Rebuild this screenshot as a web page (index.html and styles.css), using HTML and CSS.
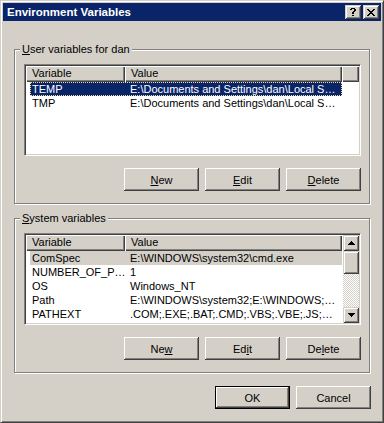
FILE: index.html
```html
<!DOCTYPE html>
<html lang="en">
<head>
  <meta charset="UTF-8">
  <title>Environment Variables</title>
  <link rel="stylesheet" href="styles.css">
</head>
<body>
  <div class="window">
    <div class="titlebar">
      <span class="title">Environment Variables</span>
      <div class="title-buttons">
        <button class="cap-btn" title="Help">
          <svg width="6" height="8" viewBox="0 0 6 8" shape-rendering="crispEdges"><path d="M1 0h4v1h-4z M0 1h2v1h-2z M4 1h2v1h-2z M4 2h2v1h-2z M3 3h2v1h-2z M2 4h2v1h-2z M2 5h2v1h-2z M2 7h2v1h-2z"/></svg>
        </button>
        <button class="cap-btn" title="Close">
          <svg width="8" height="7" viewBox="0 0 8 7" shape-rendering="crispEdges"><path d="M0 0h2v1h-2z M6 0h2v1h-2z M1 1h2v1h-2z M5 1h2v1h-2z M2 2h4v1h-4z M3 3h2v1h-2z M2 4h4v1h-4z M1 5h2v1h-2z M5 5h2v1h-2z M0 6h2v1h-2z M6 6h2v1h-2z"/></svg>
        </button>
      </div>
    </div>

    <div class="content">
      <section class="group">
        <div class="group-title"><u>U</u>ser variables for dan</div>
        <div class="list">
          <div class="list-main">
            <div class="list-head">
              <span class="head-cell col-var">Variable</span>
              <span class="head-cell col-val">Value</span>
              <span class="head-cell col-fill"></span>
            </div>
            <div class="row selected">
              <span class="cell-var">TEMP</span>
              <span class="cell-val">E:\Documents and Settings\dan\Local S…</span>
            </div>
            <div class="row">
              <span class="cell-var">TMP</span>
              <span class="cell-val">E:\Documents and Settings\dan\Local S…</span>
            </div>
          </div>
        </div>
        <div class="btn-row">
          <button class="btn"><u>N</u>ew</button>
          <button class="btn"><u>E</u>dit</button>
          <button class="btn"><u>D</u>elete</button>
        </div>
      </section>

      <section class="group">
        <div class="group-title"><u>S</u>ystem variables</div>
        <div class="list">
          <div class="list-main">
            <div class="list-head">
              <span class="head-cell col-var">Variable</span>
              <span class="head-cell col-val">Value</span>
              <span class="head-cell col-fill"></span>
            </div>
            <div class="row inactive">
              <span class="cell-var">ComSpec</span>
              <span class="cell-val">E:\WINDOWS\system32\cmd.exe</span>
            </div>
            <div class="row">
              <span class="cell-var">NUMBER_OF_P…</span>
              <span class="cell-val">1</span>
            </div>
            <div class="row">
              <span class="cell-var">OS</span>
              <span class="cell-val">Windows_NT</span>
            </div>
            <div class="row">
              <span class="cell-var">Path</span>
              <span class="cell-val">E:\WINDOWS\system32;E:\WINDOWS;…</span>
            </div>
            <div class="row">
              <span class="cell-var">PATHEXT</span>
              <span class="cell-val">.COM;.EXE;.BAT;.CMD;.VBS;.VBE;.JS;…</span>
            </div>
          </div>
          <div class="scrollbar">
            <div class="sb-btn">
              <svg width="7" height="4" viewBox="0 0 7 4" shape-rendering="crispEdges"><path d="M3 0h1v1h-1z M2 1h3v1h-3z M1 2h5v1h-5z M0 3h7v1h-7z"/></svg>
            </div>
            <div class="sb-thumb"></div>
            <div class="sb-track"></div>
            <div class="sb-btn">
              <svg width="7" height="4" viewBox="0 0 7 4" shape-rendering="crispEdges"><path d="M0 0h7v1h-7z M1 1h5v1h-5z M2 2h3v1h-3z M3 3h1v1h-1z"/></svg>
            </div>
          </div>
        </div>
        <div class="btn-row">
          <button class="btn">Ne<u>w</u></button>
          <button class="btn">Ed<u>i</u>t</button>
          <button class="btn">De<u>l</u>ete</button>
        </div>
      </section>

      <div class="dialog-buttons">
        <button class="btn default">OK</button>
        <button class="btn">Cancel</button>
      </div>
    </div>
  </div>
</body>
</html>
```

FILE: styles.css
```css
/* Classic dialog colours */
body {
  margin: 0;
  font-family: "Liberation Sans", Arial, sans-serif;
  font-size: 11px;
  color: #000;
  background: #d4d0c8;
}

.window {
  width: 384px;
  height: 423px;
  box-sizing: border-box;
  background: #d4d0c8;
  border: 1px solid;
  border-color: #d4d0c8 #404040 #404040 #d4d0c8;
  box-shadow: inset 1px 1px #fff, inset -1px -1px #808080;
  padding: 2px;
}

.titlebar {
  height: 18px;
  background: #0a246a;
  color: #fff;
  display: flex;
  align-items: center;
  justify-content: space-between;
  padding: 0 2px;
}

.title {
  font-weight: bold;
  font-size: 11.5px;
  padding-left: 2px;
}

.title-buttons {
  display: flex;
  gap: 2px;
}

.cap-btn {
  width: 16px;
  height: 14px;
  padding: 0;
  border: none;
  background: #d4d0c8;
  display: flex;
  align-items: center;
  justify-content: center;
  box-shadow: inset 1px 1px #d4d0c8, inset -1px -1px #404040, inset 2px 2px #fff, inset -2px -2px #808080;
}

.cap-btn svg {
  fill: #000;
}

.content {
  padding: 28px 11px 0;
}

.group {
  border: 1px solid #808080;
  box-shadow: 1px 1px #fff, inset 1px 1px #fff;
  padding: 0 8px 12px 9px;
}

.group + .group {
  margin-top: 14px;
}

.group-title {
  width: max-content;
  margin: -7px 0 0 -4px;
  padding: 0 2px;
  line-height: 13px;
  background: #d4d0c8;
}

.list {
  display: flex;
  margin-top: 8px;
  height: 92px;
  box-sizing: border-box;
  border: 1px solid;
  border-color: #808080 #fff #fff #808080;
  box-shadow: inset 1px 1px #404040, inset -1px -1px #d4d0c8;
  padding: 1px;
  background: #fff;
}

.list-main {
  flex: 1;
  overflow: hidden;
}

.list-head {
  display: flex;
  height: 16px;
}

.head-cell {
  box-sizing: border-box;
  height: 16px;
  line-height: 15px;
  padding-left: 6px;
  background: #d4d0c8;
  box-shadow: inset 1px 1px #fff, inset -1px -1px #404040, inset -2px -2px #808080;
}

.col-var {
  width: 99px;
}

.col-val {
  width: 217px;
}

.col-fill {
  flex: 1;
  padding: 0;
}

.row {
  display: flex;
  width: 312px;
  height: 14px;
  line-height: 14px;
  margin-left: 4px;
  white-space: nowrap;
}

.cell-var {
  width: 100px;
  box-sizing: border-box;
  padding-left: 2px;
}

.cell-val {
  flex: 1;
}

.row.selected {
  background: #0a246a;
  color: #fff;
  outline: 1px dotted #f0e08c;
  outline-offset: -1px;
}

.row.inactive {
  background: #d4d0c8;
}

.scrollbar {
  width: 16px;
  display: flex;
  flex-direction: column;
}

.sb-btn {
  height: 16px;
  flex: none;
  display: flex;
  align-items: center;
  justify-content: center;
  background: #d4d0c8;
  box-shadow: inset 1px 1px #d4d0c8, inset -1px -1px #404040, inset 2px 2px #fff, inset -2px -2px #808080;
}

.sb-thumb {
  height: 23px;
  flex: none;
  background: #d4d0c8;
  box-shadow: inset 1px 1px #d4d0c8, inset -1px -1px #404040, inset 2px 2px #fff, inset -2px -2px #808080;
}

.sb-track {
  flex: 1;
  background: repeating-conic-gradient(#d4d0c8 0 25%, #fff 0 50%) 0 0 / 2px 2px;
}

.btn-row {
  display: flex;
  justify-content: flex-end;
  gap: 6px;
  margin-top: 12px;
}

.btn {
  width: 75px;
  height: 23px;
  box-sizing: border-box;
  padding: 0;
  border: none;
  font: inherit;
  color: #000;
  background: #d4d0c8;
  box-shadow: inset -1px -1px #404040, inset 1px 1px #fff, inset -2px -2px #808080;
}

.btn.default {
  border: 1px solid #000;
}

.dialog-buttons {
  display: flex;
  justify-content: flex-end;
  gap: 6px;
  margin: 13px -1px 0 0;
}
```
